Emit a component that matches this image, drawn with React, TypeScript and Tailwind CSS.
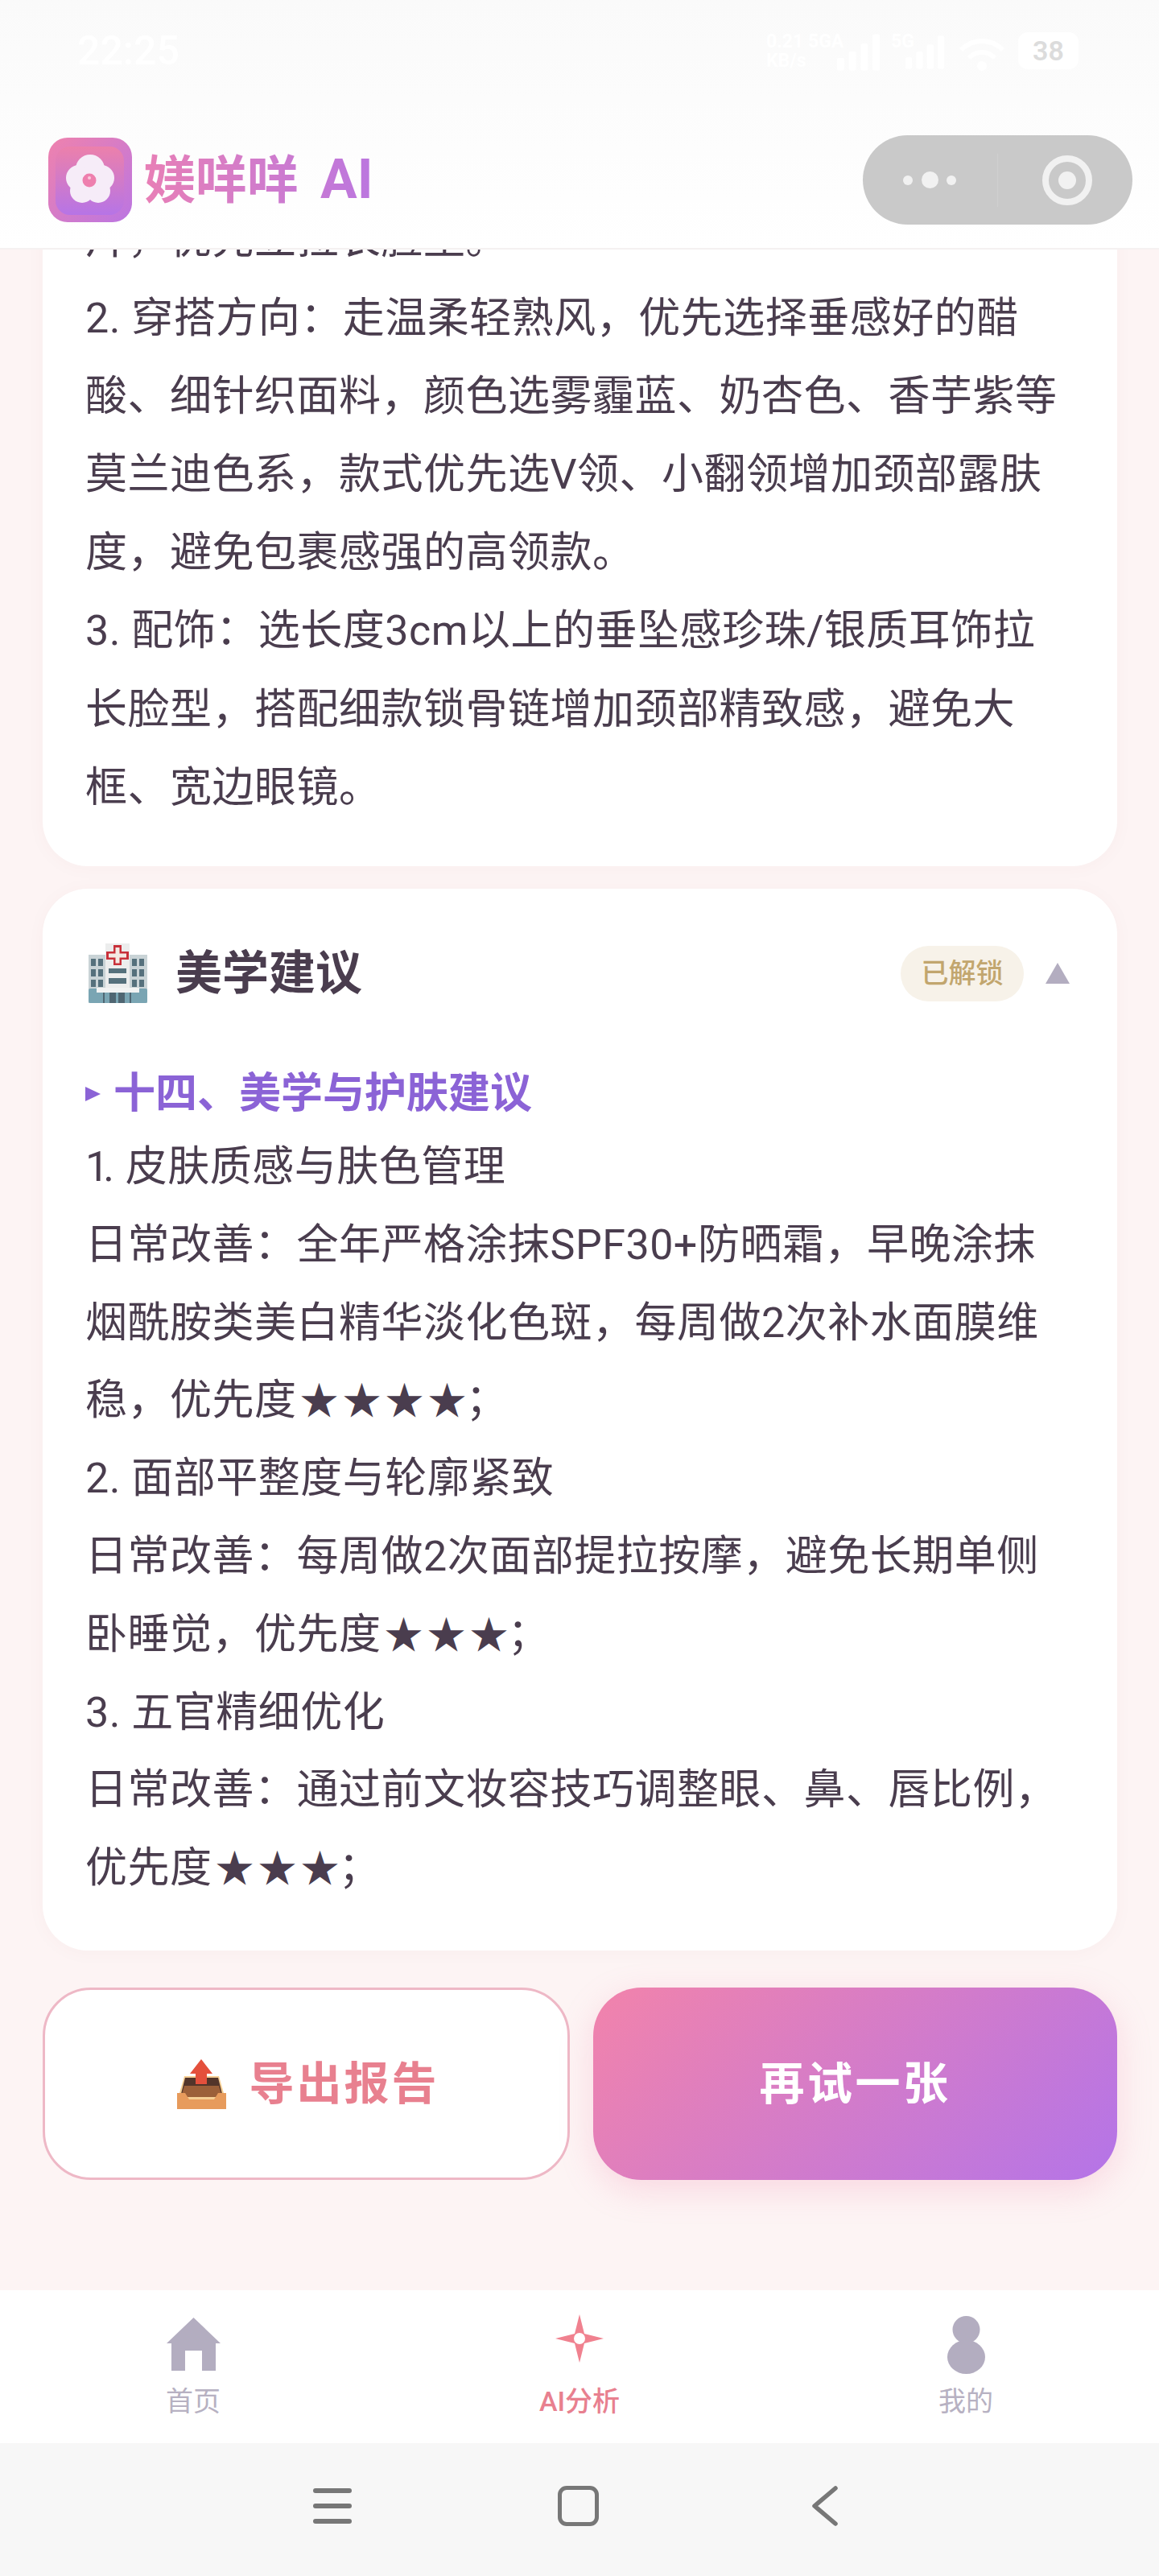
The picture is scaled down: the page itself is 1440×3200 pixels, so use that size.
import React from "react";

const firstCardLines = [
  "片，优先立拉长脸型。",
  "2. 穿搭方向：走温柔轻熟风，优先选择垂感好的醋",
  "酸、细针织面料，颜色选雾霾蓝、奶杏色、香芋紫等",
  "莫兰迪色系，款式优先选V领、小翻领增加颈部露肤",
  "度，避免包裹感强的高领款。",
  "3. 配饰：选长度3cm以上的垂坠感珍珠/银质耳饰拉",
  "长脸型，搭配细款锁骨链增加颈部精致感，避免大",
  "框、宽边眼镜。",
];

const adviceLines = [
  "1. 皮肤质感与肤色管理",
  "日常改善：全年严格涂抹SPF30+防晒霜，早晚涂抹",
  "烟酰胺类美白精华淡化色斑，每周做2次补水面膜维",
  "稳，优先度★★★★；",
  "2. 面部平整度与轮廓紧致",
  "日常改善：每周做2次面部提拉按摩，避免长期单侧",
  "卧睡觉，优先度★★★；",
  "3. 五官精细优化",
  "日常改善：通过前文妆容技巧调整眼、鼻、唇比例，",
  "优先度★★★；",
];

// Rating stars are set smaller and wider apart than the body text; a leading "1" is tightened.
function ReportLine({ text }: { text: string }) {
  const parts = text.split(/(★+)/);
  return (
    <div>
      {parts.map((part, i) => {
        if (part.startsWith("★")) {
          return (
            <span key={i} className="text-[48px] leading-[1] tracking-[5px] ml-[4px] mr-[-6px]">
              {part}
            </span>
          );
        }
        if (part.startsWith("1. ")) {
          return (
            <span key={i}>
              <span className="tracking-[-7px]">1</span>
              {part.slice(1)}
            </span>
          );
        }
        return <span key={i}>{part}</span>;
      })}
    </div>
  );
}

function FlowerLogo() {
  return (
    <svg viewBox="0 0 104 105" className="w-[104px] h-[105px] shrink-0">
      <defs>
        <linearGradient id="logoOuter" x1="0" y1="0" x2="1" y2="1">
          <stop offset="0" stopColor="#ef82ad" />
          <stop offset="1" stopColor="#bb75e2" />
        </linearGradient>
        <linearGradient id="logoInner" x1="0" y1="0" x2="0" y2="1">
          <stop offset="0" stopColor="#ec80ab" />
          <stop offset="1" stopColor="#b674e6" />
        </linearGradient>
      </defs>
      <rect width="104" height="105" rx="24" fill="url(#logoOuter)" />
      <rect x="9" y="11" width="85" height="85" rx="18" fill="url(#logoInner)" />
      <g fill="#f6ecf8">
        <circle cx="52" cy="39" r="18" />
        <circle cx="38" cy="50" r="16" />
        <circle cx="66" cy="50" r="16" />
        <circle cx="42" cy="66" r="15" />
        <circle cx="62" cy="66" r="15" />
        <circle cx="52" cy="54" r="18" />
      </g>
      <circle cx="51" cy="53" r="8.500" fill="#ee7fae" />
      <circle cx="51" cy="50" r="2" fill="#f9c9dc" />
    </svg>
  );
}

function SignalBars({ className }: { className: string }) {
  return (
    <svg viewBox="0 0 56 46" className={className} fill="#ffffff">
      <rect x="0" y="30" width="9" height="16" rx="2" />
      <rect x="15" y="22" width="9" height="24" rx="2" />
      <rect x="30" y="12" width="9" height="34" rx="2" />
      <rect x="45" y="0" width="9" height="46" rx="2" />
    </svg>
  );
}

function HospitalIcon() {
  return (
    <svg viewBox="0 0 73 74" className="w-[73px] h-[74px] shrink-0 ml-[4px]">
      <rect x="0" y="14" width="73" height="60" fill="#c9d3d6" />
      <rect x="21" y="0" width="30" height="74" fill="#eceded" />
      <g fill="#55707c">
        <rect x="3" y="19" width="6" height="9" /><rect x="12" y="19" width="6" height="9" />
        <rect x="3" y="32" width="6" height="9" /><rect x="12" y="32" width="6" height="9" />
        <rect x="3" y="45" width="6" height="9" /><rect x="12" y="45" width="6" height="9" />
        <rect x="54" y="19" width="6" height="9" /><rect x="63" y="19" width="6" height="9" />
        <rect x="54" y="32" width="6" height="9" /><rect x="63" y="32" width="6" height="9" />
        <rect x="54" y="45" width="6" height="9" /><rect x="63" y="45" width="6" height="9" />
        <rect x="25" y="31" width="22" height="6" /><rect x="25" y="43" width="22" height="7" />
      </g>
      <path d="M31 2h10v8h9v10h-9v7H31v-7h-9V10h9z" fill="#c8303a" />
      <path d="M33.500 5h5v7.500h8.500v5H38.500v7h-5v-7H25v-5h8.500z" fill="#f4e9e4" />
      <rect x="0" y="56" width="73" height="18" rx="2" fill="#7aa5b3" />
      <rect x="10" y="55" width="53" height="6" fill="#f2f3f3" />
      <g fill="#4f6672">
        <rect x="18" y="61" width="2" height="13" /><rect x="26" y="61" width="8" height="13" />
        <rect x="37" y="61" width="8" height="13" /><rect x="51" y="61" width="2" height="13" />
      </g>
    </svg>
  );
}

function OutboxIcon() {
  return (
    <svg viewBox="0 0 61 62" className="w-[61px] h-[62px] shrink-0">
      <path d="M9 21h43l6 21v20H3V42z" fill="#f6cf94" />
      <path d="M10 23h41l5 20H5z" fill="#53352a" />
      <path d="M9 33h43l4 14H5z" fill="#9c6039" />
      <path d="M0 42h10l5 8h31l5-8h10v20H0z" fill="#e79b5c" />
      <path d="M30 0L44 18h-7v13H23V18h-7z" fill="#e4503c" />
    </svg>
  );
}

function StatusBar() {
  return (
    <div className="h-[168px] flex justify-between pl-[96px] pr-[100px] pt-[38px] text-white">
      <span className="text-[50px] leading-[50px] font-medium">22:25</span>
      <div className="flex items-start pt-[2px]">
        <div className="w-[88px] text-[23px] leading-[24px] font-bold whitespace-nowrap">
          0.21 5GA
          <br />
          KB/s
        </div>
        <SignalBars className="w-[55px] h-[46px] mt-[2px]" />
        <span className="w-[33px] text-[23px] leading-[24px] font-bold ml-[12px] -mr-[15px]">5G</span>
        <SignalBars className="w-[50px] h-[46px] mt-[2px]" />
        <svg viewBox="0 0 60 46" className="w-[60px] h-[46px] mx-[15px] mt-[2px]" fill="none" stroke="#ffffff" strokeWidth="6">
          <path d="M4 20a36 36 0 0 1 52 0" />
          <path d="M14 30a22 22 0 0 1 32 0" />
          <circle cx="30" cy="40" r="3" fill="#ffffff" />
        </svg>
        <span className="w-[75px] h-[46px] rounded-[12px] bg-white text-[#dcdcdc] text-[34px] leading-[46px] font-semibold text-center">38</span>
      </div>
    </div>
  );
}

function TitleBar() {
  return (
    <div className="flex items-center h-[111px] pl-[60px] pr-[33px]">
      <FlowerLogo />
      <span className="ml-[15px] text-[64px] leading-[80px] font-bold whitespace-nowrap bg-gradient-to-r from-[#e87fb6] to-[#bb76df] bg-clip-text text-transparent">
        媄咩咩<span className="ml-[27px] text-[68px]">AI</span>
      </span>
      <div className="ml-auto w-[335px] h-[111px] rounded-full bg-[#c9c9c9] flex items-center">
        <div className="w-[167px] flex items-center justify-end gap-[10.5px] pr-[51px]">
          <span className="w-[12px] h-[12px] rounded-full bg-[#f1f1f1]" />
          <span className="w-[21px] h-[21px] rounded-full bg-[#f1f1f1]" />
          <span className="w-[12px] h-[12px] rounded-full bg-[#f1f1f1]" />
        </div>
        <div className="w-px h-[66px] bg-[#d0d0d0]" />
        <div className="flex-1 flex items-center justify-center pl-[5px]">
          <div className="w-[62px] h-[62px] rounded-full border-[8px] border-[#f1f1f1] flex items-center justify-center">
            <span className="w-[22px] h-[22px] rounded-full bg-[#f1f1f1]" />
          </div>
        </div>
      </div>
    </div>
  );
}

function ActionButtons() {
  return (
    <div className="flex gap-[29px] mt-[46px]">
      <button className="w-[655px] h-[239px] rounded-[60px] bg-white border-[3px] border-[#eeb8c6] flex items-center justify-center gap-[29px] pl-[4px] text-[#e8808f] text-[56px] font-semibold tracking-[3px]">
        <OutboxIcon />
        <span>导出报告</span>
      </button>
      <button className="flex-1 h-[239px] rounded-[60px] bg-[linear-gradient(135deg,#f283ab,#b474e8)] shadow-[0_12px_40px_rgba(240,130,170,0.25)] text-white text-[56px] font-semibold tracking-[3.500px]">
        再试一张
      </button>
    </div>
  );
}

function TabBar() {
  return (
    <div className="h-[190px] bg-white grid grid-cols-3 text-center text-[34px] leading-[40px] font-normal text-[#b7b1c2]">
      <div className="flex flex-col items-center pt-[34px]">
        <svg viewBox="0 0 67 66" className="w-[67px] h-[66px]" fill="#b3adc0">
          <path d="M33.500 0L67 32h-6v34H44V41H23v25H6V32H0z" />
        </svg>
        <span className="mt-[18px]">首页</span>
      </div>
      <div className="flex flex-col items-center pt-[30px] text-[#e8808f] font-medium">
        <svg viewBox="0 0 60 60" className="w-[60px] h-[60px] mb-[2px]">
          <path d="M30 0L36 24L60 30L36 36L30 60L24 36L0 30L24 24z" fill="#f0818f" />
          <circle cx="30" cy="30" r="7" fill="#ffffff" />
        </svg>
        <span className="mt-[26px]">AI分析</span>
      </div>
      <div className="flex flex-col items-center pt-[32px]">
        <svg viewBox="0 0 47 72" className="w-[47px] h-[72px]" fill="#b3adc0">
          <ellipse cx="23.500" cy="17" rx="17" ry="17" />
          <ellipse cx="23.500" cy="51" rx="23.500" ry="21" />
        </svg>
        <span className="mt-[14px]">我的</span>
      </div>
    </div>
  );
}

function SystemNav() {
  return (
    <div className="h-[165px] bg-[#f7f7f7] flex items-start pt-[53px] pl-[389px]">
      <div className="w-[48px] h-[50px] flex flex-col justify-between py-[3px]">
        <span className="h-[6px] rounded-full bg-[#777777]" />
        <span className="h-[6px] rounded-full bg-[#777777]" />
        <span className="h-[6px] rounded-full bg-[#777777]" />
      </div>
      <div className="ml-[256px] w-[51px] h-[50px] rounded-[11px] border-[5px] border-[#777777]" />
      <svg viewBox="0 0 32 50" className="ml-[265px] w-[32px] h-[50px]" fill="none" stroke="#777777" strokeWidth="5.500" strokeLinecap="round" strokeLinejoin="round">
        <path d="M29 3L3 25L29 47" />
      </svg>
    </div>
  );
}

export default function App() {
  return (
    <div className="w-[1440px] h-[3200px] flex flex-col bg-[#fdf4f4] text-[#4a3d4e] font-['Roboto','Noto_Sans_CJK_SC',sans-serif] overflow-hidden">
      <header className="h-[310px] shrink-0 bg-gradient-to-b from-[#fafafa] to-[#ffffff] border-b-[2px] border-[#f5f1f1] z-10">
        <StatusBar />
        <TitleBar />
      </header>

      {/* Scrolled report: the content is pinned to the bottom, its top slides under the header */}
      <main className="flex-1 min-h-0 overflow-hidden flex flex-col justify-end px-[53px] pr-[52px] pb-[137px]">
        <section className="shrink-0 bg-white rounded-[56px] px-[53px] pb-[49px] text-[52px] leading-[97.2px] tracking-[0.5px] whitespace-nowrap shadow-[0_2px_24px_rgba(120,60,60,0.03)]">
          {firstCardLines.map((line) => (
            <ReportLine key={line} text={line} />
          ))}
        </section>

        <section className="shrink-0 mt-[28px] bg-white rounded-[56px] pl-[53px] pr-[59px] pt-[68px] pb-[53px] shadow-[0_2px_24px_rgba(120,60,60,0.03)]">
          <div className="flex items-center h-[74px]">
            <HospitalIcon />
            <h2 className="ml-[35px] text-[58px] leading-[74px] font-semibold">美学建议</h2>
            <span className="ml-auto h-[69px] w-[153px] rounded-full bg-[#f7f2e9] text-[#c2a66e] text-[34px] leading-[69px] text-center font-medium">已解锁</span>
            <svg viewBox="0 0 30 26" className="ml-[27px] w-[30px] h-[26px]" fill="#b3adc0">
              <path d="M15 0L30 26H0z" />
            </svg>
          </div>
          <h3 className="mt-[74px] flex items-center text-[52px] leading-[78px] font-semibold text-[#8b63d6] whitespace-nowrap">
            <svg viewBox="0 0 19 18" className="w-[19px] h-[18px] mr-[16px]" fill="#8b63d6">
              <path d="M0 0L19 9L0 18z" />
            </svg>
            十四、美学与护肤建议
          </h3>
          <div className="mt-[4px] text-[52px] leading-[96.8px] tracking-[0.5px] whitespace-nowrap">
            {adviceLines.map((line) => (
              <ReportLine key={line} text={line} />
            ))}
          </div>
        </section>

        <ActionButtons />
      </main>

      <TabBar />
      <SystemNav />
    </div>
  );
}
